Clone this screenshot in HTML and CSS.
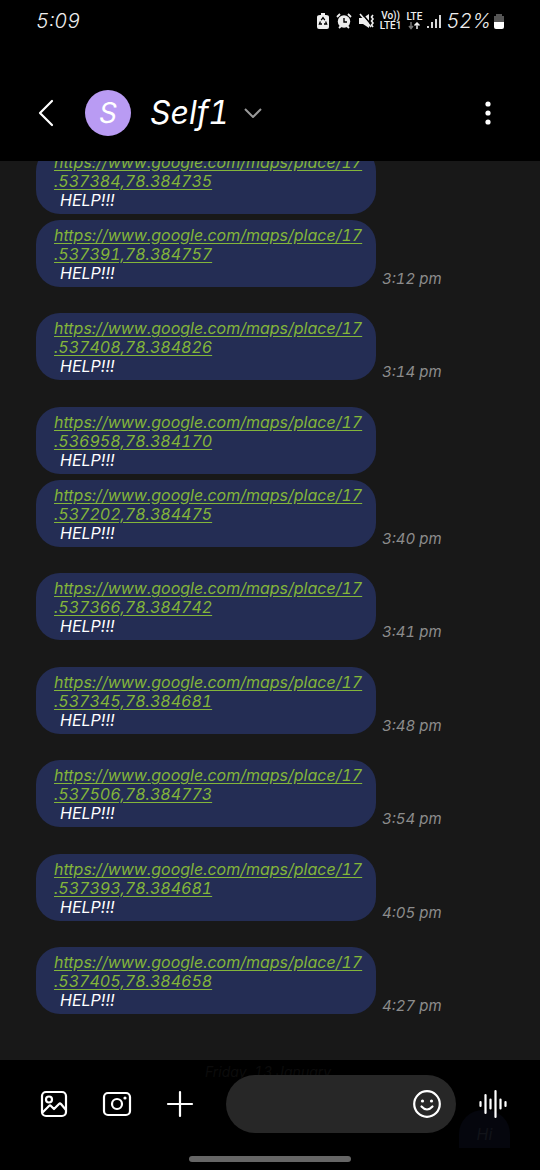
FILE: index.html
```html
<!DOCTYPE html>
<html lang="en">
<head>
<meta charset="utf-8">
<meta name="viewport" content="width=device-width, initial-scale=1">
<title>Self1</title>
<link rel="stylesheet" href="styles.css">
</head>
<body>
<div class="status">
  <span class="clock">5:09</span>
  <div class="indicators">
    <svg class="ind" width="12" height="16" viewBox="0 0 12 16"><path d="M3 2h1V0h4v2h1q3 0 3 2v10q0 2-2 2H2q-2 0-2-2V4q0-2 3-2z" fill="#eee"/><path d="M4.200 7.200 6 4.600 7.800 7.200M8.600 8.600 9.600 11H7M5 11H2.400l1-2.400" fill="none" stroke="#000" stroke-width="1.300"/></svg>
    <svg class="ind alarm" width="16" height="16" viewBox="0 0 16 16"><circle cx="8" cy="8.500" r="6.200" fill="#eee"/><path d="M1 4 4 1M15 4l-3-3M3 15l2-2M13 15l-2-2" stroke="#eee" stroke-width="1.800"/><path d="M8 5v4h3" fill="none" stroke="#000" stroke-width="1.400"/></svg>
    <svg class="ind" width="16" height="16" viewBox="0 0 16 16"><path d="M0 5h4l6-4v14l-6-4H0z" fill="#eee"/><path d="M2.500 0l10 12" stroke="#000" stroke-width="1.600"/><path d="M1 1l11 13" stroke="#eee" stroke-width="1.600"/><path d="M14 2l-1.500 2 1.500 2-1.500 2 1.500 2-1.500 2 1.500 2" fill="none" stroke="#eee" stroke-width="1.600"/></svg>
    <span class="net">Vo))<br>LTE1</span>
    <span class="net net-lte">LTE<svg width="12" height="8" viewBox="0 0 12 8" fill="none" stroke-width="1.500"><path d="M3 0v6M1 4l2 2.500L5 4" stroke="#777"/><path d="M9 7V1M6.500 3.500 9 1l2.500 2.500" stroke="#eee"/></svg></span>
    <svg class="ind bars" width="14" height="15" viewBox="0 0 14 15" stroke="#eee" stroke-width="1.800"><path d="M1 12v2M5 8v6M9 5v9M13 1v13"/></svg>
    <span class="charge">52%<svg class="ind" width="10" height="15" viewBox="0 0 10 15"><path d="M2 2V0h6v2h2v7H0V2z" fill="#555"/><path d="M0 8h10v5q0 2-2 2H2q-2 0-2-2z" fill="#fff"/></svg></span>
  </div>
</div>
<header class="header">
  <button class="icon-btn" aria-label="Back"><svg width="16" height="28" viewBox="0 0 16 28"><path d="M14 2 2 14l12 12" class="line"/></svg></button>
  <span class="avatar">S</span>
  <button class="contact"><span>Self1</span><svg width="18" height="10" viewBox="0 0 18 10"><path d="M1 1l8 8 8-8" fill="none" stroke="#999" stroke-width="2"/></svg></button>
  <button class="icon-btn more" aria-label="More options"><svg width="6" height="24" viewBox="0 0 6 24" fill="#fff"><circle cx="3" cy="3" r="2.600"/><circle cx="3" cy="12" r="2.600"/><circle cx="3" cy="21" r="2.600"/></svg></button>
</header>
<main class="chat">
  <ul class="thread">
    <li class="group">
      <p class="bubble"><a href="https://www.google.com/maps/place/17.537384,78.384735">https://www.google.com/maps/place/17<br>.537384,78.384735</a><span class="help">HELP!!!</span></p>
      <div class="row"><p class="bubble"><a href="https://www.google.com/maps/place/17.537391,78.384757">https://www.google.com/maps/place/17<br>.537391,78.384757</a><span class="help">HELP!!!</span></p><time>3:12 pm</time></div>
    </li>
    <li class="group"><div class="row"><p class="bubble"><a href="https://www.google.com/maps/place/17.537408,78.384826">https://www.google.com/maps/place/17<br>.537408,78.384826</a><span class="help">HELP!!!</span></p><time>3:14 pm</time></div></li>
    <li class="group">
      <p class="bubble"><a href="https://www.google.com/maps/place/17.536958,78.384170">https://www.google.com/maps/place/17<br>.536958,78.384170</a><span class="help">HELP!!!</span></p>
      <div class="row"><p class="bubble"><a href="https://www.google.com/maps/place/17.537202,78.384475">https://www.google.com/maps/place/17<br>.537202,78.384475</a><span class="help">HELP!!!</span></p><time>3:40 pm</time></div>
    </li>
    <li class="group"><div class="row"><p class="bubble"><a href="https://www.google.com/maps/place/17.537366,78.384742">https://www.google.com/maps/place/17<br>.537366,78.384742</a><span class="help">HELP!!!</span></p><time>3:41 pm</time></div></li>
    <li class="group"><div class="row"><p class="bubble"><a href="https://www.google.com/maps/place/17.537345,78.384681">https://www.google.com/maps/place/17<br>.537345,78.384681</a><span class="help">HELP!!!</span></p><time>3:48 pm</time></div></li>
    <li class="group"><div class="row"><p class="bubble"><a href="https://www.google.com/maps/place/17.537506,78.384773">https://www.google.com/maps/place/17<br>.537506,78.384773</a><span class="help">HELP!!!</span></p><time>3:54 pm</time></div></li>
    <li class="group"><div class="row"><p class="bubble"><a href="https://www.google.com/maps/place/17.537393,78.384681">https://www.google.com/maps/place/17<br>.537393,78.384681</a><span class="help">HELP!!!</span></p><time>4:05 pm</time></div></li>
    <li class="group"><div class="row"><p class="bubble"><a href="https://www.google.com/maps/place/17.537405,78.384658">https://www.google.com/maps/place/17<br>.537405,78.384658</a><span class="help">HELP!!!</span></p><time>4:27 pm</time></div></li>
  </ul>
</main>
<footer class="footer">
  <span class="under-date">Friday, 13 January</span>
  <span class="under-bubble">Hi</span>
  <form class="composer">
    <div class="tools">
      <button type="button" class="icon-btn" aria-label="Gallery"><svg width="28" height="28" viewBox="0 0 28 28" class="line"><rect x="2" y="2" width="24" height="24" rx="4"/><circle cx="9" cy="9.500" r="3"/><path d="M3 22l6-6q1-1 2 0l3 3 5-5q1-1 2 0l5 6"/></svg></button>
      <button type="button" class="icon-btn" aria-label="Camera"><svg width="30" height="26" viewBox="0 0 30 26" class="line"><rect x="2" y="2" width="26" height="22" rx="4"/><circle cx="15" cy="13" r="5"/><circle cx="23" cy="7" r="1.600" fill="#fff" stroke="none"/></svg></button>
      <button type="button" class="icon-btn" aria-label="Add"><svg width="28" height="28" viewBox="0 0 28 28" class="line"><path d="M14 2v24M2 14h24"/></svg></button>
    </div>
    <div class="field">
      <input type="text" aria-label="Message">
      <button type="button" class="icon-btn" aria-label="Emoji"><svg width="30" height="30" viewBox="0 0 30 30" class="line"><circle cx="15" cy="15" r="12.800"/><path d="M9.500 17.500q5.500 6 11 0"/><g fill="#fff" stroke="none"><circle cx="10.500" cy="12" r="1.600"/><circle cx="19.500" cy="12" r="1.600"/></g></svg></button>
    </div>
    <button type="button" class="icon-btn" aria-label="Voice message"><svg width="30" height="30" viewBox="0 0 30 30" class="line"><path d="M2.500 13v4M7.500 6v18M12.500 10.500v9M17.500 2v26M22.500 10.500v9M27.500 13v4"/></svg></button>
  </form>
  <div class="home"></div>
</footer>
</body>
</html>
```
FILE: styles.css
```css
* { box-sizing: border-box; }
body {
  margin: 0;
  height: 100vh;
  display: flex;
  flex-direction: column;
  background: #000;
  color: #fff;
  font-family: Inter, "Open Sans", sans-serif;
  font-style: italic;
  font-variant-numeric: tabular-nums;
}
button, input {
  margin: 0;
  padding: 0;
  border: 0;
  background: none;
  color: inherit;
  font: inherit;
}
svg { display: block; flex: none; }
.line {
  fill: none;
  stroke: #fff;
  stroke-width: 2.200;
  stroke-linecap: round;
  stroke-linejoin: round;
}
.icon-btn { flex: none; }
.status {
  height: 42px;
  padding: 0 36px;
  display: flex;
  justify-content: space-between;
  align-items: center;
  font-size: 20px;
  font-weight: 300;
  color: #eee;
}
.indicators { display: flex; align-items: center; gap: 5px; }
.alarm { margin: 0 2px; }
.net {
  font: 500 10px/10px Roboto, sans-serif;
  text-align: center;
}
.net-lte svg { margin: 0 auto; }
.charge { display: flex; align-items: center; gap: 3px; }
.header {
  height: 119px;
  padding: 23px 49px 0 38px;
  display: flex;
  align-items: center;
}
.avatar {
  width: 46px;
  height: 46px;
  margin: 0 19px 0 31px;
  border-radius: 50%;
  background: #b99bf3;
  font-size: 28px;
  line-height: 46px;
  text-align: center;
}
.contact {
  display: flex;
  align-items: center;
  gap: 15px;
  font-size: 32px;
  line-height: 44px;
  font-variant-numeric: tabular-nums;
}
.more { margin-left: auto; }
.chat {
  flex: 1;
  min-height: 0;
  overflow: hidden;
  display: flex;
  background: #181818;
}
.thread {
  flex: 1;
  list-style: none;
  margin: -14px 0 0;
  padding: 0 36px 46px;
  display: flex;
  flex-direction: column;
  justify-content: space-between;
}
.group { display: flex; flex-direction: column; gap: 6px; }
.row { display: flex; align-items: flex-end; gap: 6px; }
.bubble {
  width: 340px;
  margin: 0;
  padding: 6px 18px 5px;
  border-radius: 24px;
  background: #242d54;
  font-size: 16px;
  line-height: 19px;
  white-space: nowrap;
}
.bubble a { color: #83b53a; display: block; text-underline-offset: 2px; }
.help { display: block; padding-left: 6px; line-height: 18px; }
time { color: #8c8c8c; font-size: 15px; line-height: 16px; }
.footer {
  position: relative;
  padding: 15px 0 8px;
  display: flex;
  flex-direction: column;
  align-items: center;
  gap: 23px;
}
.composer {
  position: relative;
  width: 100%;
  padding: 0 32px 0 40px;
  display: flex;
  align-items: center;
  gap: 22px;
}
.tools {
  display: flex;
  align-items: center;
  gap: 34px;
  margin-right: 10px;
}
.field {
  flex: 1;
  height: 58px;
  min-width: 0;
  padding: 0 14px;
  display: flex;
  align-items: center;
  border-radius: 29px;
  background: #272727;
}
.field input { flex: 1; min-width: 0; height: 100%; outline: 0; }
.home {
  width: 162px;
  height: 6px;
  border-radius: 3px;
  background: #666;
}
.under-date {
  position: absolute;
  top: 3px;
  left: 205px;
  font-size: 14px;
  line-height: 18px;
  color: #0c0c0c;
}
.under-bubble {
  position: absolute;
  top: 50px;
  right: 30px;
  width: 51px;
  height: 38px;
  border-radius: 24px 24px 0 0;
  background: #05060d;
  color: #111319;
  font-size: 16px;
  line-height: 48px;
  text-align: center;
}
```
